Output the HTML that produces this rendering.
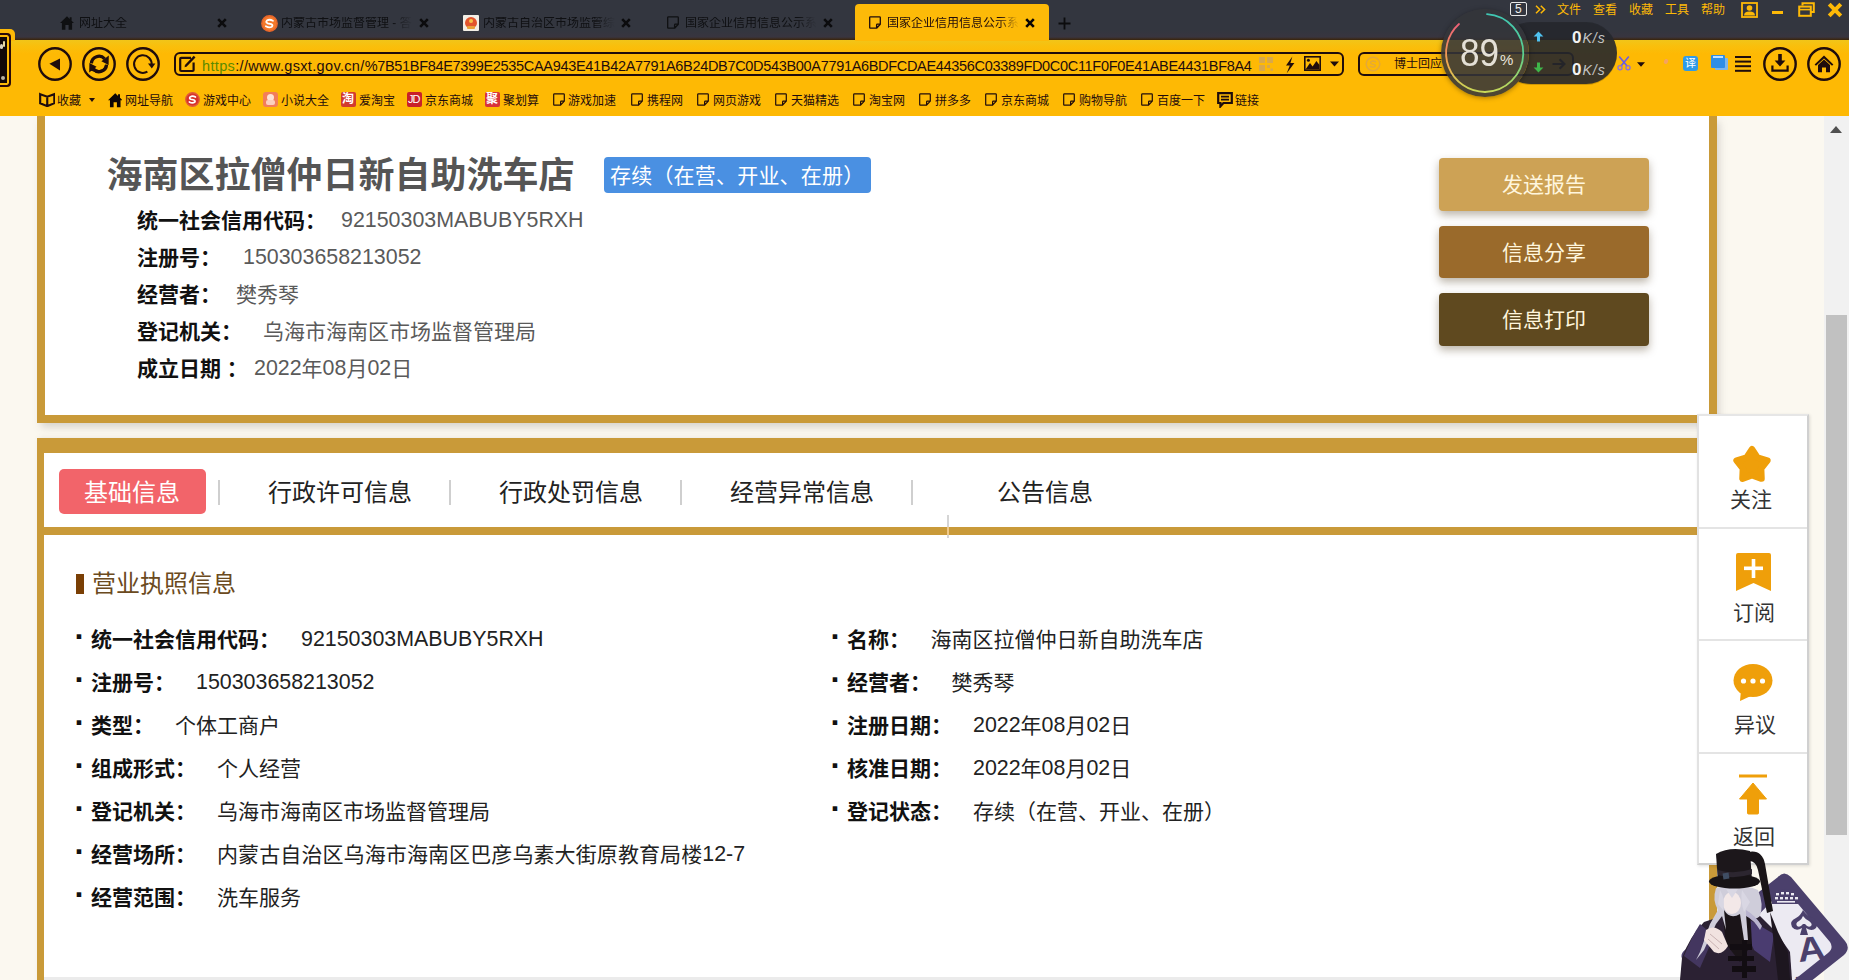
<!DOCTYPE html>
<html lang="zh-CN">
<head>
<meta charset="utf-8">
<title>国家企业信用信息公示系统</title>
<style>
*{margin:0;padding:0;box-sizing:border-box;}
html,body{width:1849px;height:980px;overflow:hidden;background:#fbf8f0;}
body{position:relative;font-family:"Liberation Sans","Noto Sans CJK SC",sans-serif;color:#222;}
.abs{position:absolute;}
.t{position:absolute;white-space:nowrap;line-height:1;}
/* ---------- browser chrome ---------- */
#topbar{left:0;top:0;width:1849px;height:40px;background:linear-gradient(#33363f 0,#33363f 30px,#38353f 37px,#3b2a1a 39px,#3a2408 40px);}
#toolbar{left:0;top:40px;width:1849px;height:76px;background:linear-gradient(#f1c519 0,#f9bf0c 6px,#feb904 14px,#feb904 100%);}
.tab{position:absolute;top:0;height:39px;width:202px;}
.tab .tt{position:absolute;left:33px;top:16px;font-size:12px;line-height:14px;color:#1b1c20;white-space:nowrap;overflow:hidden;width:128px;}
.tab .x{position:absolute;left:169px;top:16px;width:11px;height:11px;}
.tab .ic{position:absolute;left:18px;top:15px;width:14px;height:14px;}
#acttab{left:855px;top:4px;width:194px;height:37px;background:#fdba08;border-radius:4px 4px 0 0;}
.menu{font-size:12px;color:#fdb907;top:4px;}
.bm{font-size:12px;color:#1f0c0c;top:95px;letter-spacing:0;}
.bi{position:absolute;top:93px;}
/* ---------- page ---------- */
#card1{left:37px;top:116px;width:1680px;height:307px;background:#fff;border:8px solid #c99a39;border-top:none;box-shadow:3px 5px 8px -1px rgba(120,115,115,.28);}
#card2{left:37px;top:438px;width:1680px;height:560px;background:#fff;border-left:7px solid #c99a39;border-right:8px solid #c99a39;border-top:15px solid #c99a39;box-shadow:2px 0 5px rgba(120,115,115,.15);}
.lab{font-weight:bold;color:#111;font-size:21px;}
.val{color:#5a5a5a;font-size:21px;}
.n{font-size:21.4px;letter-spacing:0;position:relative;top:-1.4px;}
.val2{color:#222;font-size:21px;}
.btn{position:absolute;left:1439px;width:210px;height:52px;border-radius:4px;color:#fff6dd;font-size:21px;line-height:54px;text-align:center;overflow:hidden;box-shadow:0 4px 8px rgba(60,40,10,.35);}
.tabtxt{font-size:24px;color:#222;top:481px;}
.sep{position:absolute;width:2px;height:25px;top:480px;background:#cfcfcf;}
.dot{font-weight:bold;color:#111;font-size:32px;}
.side{position:absolute;left:1697px;width:112px;height:113px;background:#fff;border:2px solid #e2e2e2;}
.stxt{font-size:21px;color:#333;}
</style>
</head>
<body>
<!-- ======= page content ======= -->
<div id="card1" class="abs"></div>
<div id="card2" class="abs"></div>

<div class="t" style="left:106.500px;top:158px;font-size:36px;font-weight:bold;color:#555;">海南区拉僧仲日新自助洗车店</div>
<div class="abs" style="left:604px;top:157px;width:267px;height:36px;background:#4a90e2;border-radius:4px;"></div>
<div class="t" style="left:610px;top:165px;font-size:21px;letter-spacing:.2px;color:#fff;">存续（在营、开业、在册）</div>

<div class="t lab" style="left:137px;top:210px;">统一社会信用代码：</div><div class="t val" style="left:341px;top:210px;"><span class="n">92150303MABUBY5RXH</span></div>
<div class="t lab" style="left:137px;top:247px;">注册号：</div><div class="t val" style="left:243px;top:247px;"><span class="n">150303658213052</span></div>
<div class="t lab" style="left:137px;top:284px;">经营者：</div><div class="t val" style="left:236px;top:284px;">樊秀琴</div>
<div class="t lab" style="left:137px;top:321px;">登记机关：</div><div class="t val" style="left:263px;top:321px;">乌海市海南区市场监督管理局</div>
<div class="t lab" style="left:137px;top:358px;">成立日期 ：</div><div class="t val" style="left:254px;top:358px;"><span class="n">2022</span>年<span class="n">08</span>月<span class="n">02</span>日</div>

<div class="btn" style="top:158px;height:53px;background:#cda255;">发送报告</div>
<div class="btn" style="top:226px;height:52px;background:#9a6a2b;">信息分享</div>
<div class="btn" style="top:293px;height:53px;background:#5f491f;">信息打印</div>

<!-- tabs -->
<div class="abs" style="left:59px;top:469px;width:147px;height:45px;background:#f2646a;border-radius:5px;"></div>
<div class="t" style="left:84px;top:481px;font-size:24px;color:#fff;">基础信息</div>
<div class="sep" style="left:218px;"></div>
<div class="t tabtxt" style="left:268px;">行政许可信息</div>
<div class="sep" style="left:449px;"></div>
<div class="t tabtxt" style="left:499px;">行政处罚信息</div>
<div class="sep" style="left:680px;"></div>
<div class="t tabtxt" style="left:730px;">经营异常信息</div>
<div class="sep" style="left:911px;"></div>
<div class="t tabtxt" style="left:997px;">公告信息</div>
<div class="abs" style="left:947px;top:515px;width:2px;height:23px;background:#d5d5d5;"></div>
<div class="abs" style="left:44px;top:527px;width:1665px;height:8px;background:#c99a39;"></div>
<div class="abs" style="left:947px;top:527px;width:2px;height:8px;background:#f0c98a;"></div>

<!-- section -->
<div class="abs" style="left:76px;top:574px;width:8px;height:20px;background:#7a3f05;"></div>
<div class="t" style="left:92px;top:572px;font-size:24px;color:#6b4a20;">营业执照信息</div>

<div class="t dot" style="left:74.5px;top:620px;">·</div><div class="t lab" style="left:91px;top:629px;">统一社会信用代码：</div><div class="t val2" style="left:301px;top:629px;"><span class="n">92150303MABUBY5RXH</span></div>
<div class="t dot" style="left:74.5px;top:663px;">·</div><div class="t lab" style="left:91px;top:672px;">注册号：</div><div class="t val2" style="left:196px;top:672px;"><span class="n">150303658213052</span></div>
<div class="t dot" style="left:74.5px;top:706px;">·</div><div class="t lab" style="left:91px;top:715px;">类型：</div><div class="t val2" style="left:175px;top:715px;">个体工商户</div>
<div class="t dot" style="left:74.5px;top:749px;">·</div><div class="t lab" style="left:91px;top:758px;">组成形式：</div><div class="t val2" style="left:217px;top:758px;">个人经营</div>
<div class="t dot" style="left:74.5px;top:792px;">·</div><div class="t lab" style="left:91px;top:801px;">登记机关：</div><div class="t val2" style="left:217px;top:801px;">乌海市海南区市场监督管理局</div>
<div class="t dot" style="left:74.5px;top:835px;">·</div><div class="t lab" style="left:91px;top:844px;">经营场所：</div><div class="t val2" style="left:217px;top:844px;letter-spacing:.1px;">内蒙古自治区乌海市海南区巴彦乌素大街原教育局楼<span class="n">12-7</span></div>
<div class="t dot" style="left:74.5px;top:878px;">·</div><div class="t lab" style="left:91px;top:887px;">经营范围：</div><div class="t val2" style="left:217px;top:887px;">洗车服务</div>
<div class="t dot" style="left:830.5px;top:620px;">·</div><div class="t lab" style="left:847px;top:629px;">名称：</div><div class="t val2" style="left:930.5px;top:629px;">海南区拉僧仲日新自助洗车店</div>
<div class="t dot" style="left:830.5px;top:663px;">·</div><div class="t lab" style="left:847px;top:672px;">经营者：</div><div class="t val2" style="left:951.5px;top:672px;">樊秀琴</div>
<div class="t dot" style="left:830.5px;top:706px;">·</div><div class="t lab" style="left:847px;top:715px;">注册日期：</div><div class="t val2" style="left:973px;top:715px;"><span class="n">2022</span>年<span class="n">08</span>月<span class="n">02</span>日</div>
<div class="t dot" style="left:830.5px;top:749px;">·</div><div class="t lab" style="left:847px;top:758px;">核准日期：</div><div class="t val2" style="left:973px;top:758px;"><span class="n">2022</span>年<span class="n">08</span>月<span class="n">02</span>日</div>
<div class="t dot" style="left:830.5px;top:792px;">·</div><div class="t lab" style="left:847px;top:801px;">登记状态：</div><div class="t val2" style="left:973px;top:801px;">存续（在营、开业、在册）</div>

<!-- ======= floating sidebar ======= -->
<div class="abs" style="left:1697px;top:414px;width:112px;height:451px;background:#fff;border:2px solid #e0e0e0;border-color:#e6e6e6 #d0d0d0 #d0d0d0 #e2e2e2;box-shadow:1px 1px 3px rgba(0,0,0,.12);"></div>
<div class="abs" style="left:1699px;top:527px;width:108px;height:2px;background:#e4e4e4;"></div>
<div class="abs" style="left:1699px;top:639px;width:108px;height:2px;background:#e4e4e4;"></div>
<div class="abs" style="left:1699px;top:752px;width:108px;height:2px;background:#e4e4e4;"></div>
<svg class="abs" style="left:1729px;top:441px;" width="46" height="46" viewBox="0 0 46 46"><path d="M23.0 8.3 L28.6 16.7 L38.4 19.5 L32.1 27.5 L32.5 37.6 L23.0 34.1 L13.5 37.6 L13.9 27.5 L7.6 19.5 L17.4 16.7 Z" fill="#ef9f0a" stroke="#ef9f0a" stroke-width="6.5" stroke-linejoin="round"/></svg>
<div class="t stxt" style="left:1730px;top:489px;">关注</div>
<svg class="abs" style="left:1736px;top:553px;" width="35" height="39" viewBox="0 0 35 39"><path d="M2 0 H33 Q35 0 35 2 V38 L17.5 30 L0 38 V2 Q0 0 2 0 Z" fill="#ef9f0a"/><rect x="8" y="13.5" width="19" height="3.6" fill="#fff"/><rect x="15.7" y="6" width="3.6" height="19" fill="#fff"/></svg>
<div class="t stxt" style="left:1733px;top:602px;">订阅</div>
<svg class="abs" style="left:1733px;top:664px;" width="40" height="38" viewBox="0 0 40 38"><ellipse cx="20" cy="16.5" rx="19.5" ry="16.5" fill="#ef9f0a"/><path d="M8 26 L7 37 L20 31 Z" fill="#ef9f0a"/><circle cx="10.5" cy="17" r="2.6" fill="#fff"/><circle cx="20" cy="17" r="2.6" fill="#fff"/><circle cx="29.5" cy="17" r="2.6" fill="#fff"/></svg>
<div class="t stxt" style="left:1734px;top:714px;">异议</div>
<svg class="abs" style="left:1738px;top:774px;" width="30" height="41" viewBox="0 0 30 41"><rect x="1" y="0.5" width="28" height="3" fill="#ef9f0a"/><path d="M15 9 L28.5 25 H20.5 V39 Q20.5 40 19.5 40 H10.5 Q9.5 40 9.5 39 V25 H1.5 Z" fill="#ef9f0a" stroke="#ef9f0a" stroke-width="1" stroke-linejoin="round"/></svg>
<div class="t stxt" style="left:1733px;top:826px;">返回</div>
<!-- scrollbar -->
<div class="abs" style="left:1824px;top:116px;width:25px;height:864px;background:#f1f1f1;"></div>
<div class="abs" style="left:1826px;top:315px;width:21px;height:520px;background:#c1c1c1;"></div>
<svg class="abs" style="left:1830px;top:125px;" width="12" height="8" viewBox="0 0 12 8"><path d="M0 8 L6 1 L12 8 Z" fill="#505050"/></svg>
<!-- bottom grey strip -->
<div class="abs" style="left:44px;top:977px;width:1665px;height:3px;background:#ebebeb;"></div>

<!-- ======= browser chrome ======= -->
<div id="topbar" class="abs"></div>
<div id="toolbar" class="abs"></div>
<div id="acttab" class="abs"></div>
<div class="abs" style="left:-6px;top:29px;width:21px;height:12px;background:#fdb907;border-radius:5px 5px 0 0;"></div>
<div class="abs" style="left:-6px;top:33px;width:17px;height:54px;background:#120808;border:2px solid #2a0a0a;border-radius:4px;box-shadow:inset 0 0 0 2px #fdb907;"></div>
<div class="abs" style="left:0;top:44px;width:3px;height:5px;background:#d9d2c0;border-radius:2px;"></div><div class="abs" style="left:1px;top:76px;width:4px;height:4px;background:#b9b0a0;border-radius:2px;"></div><div class="abs" style="left:3px;top:41px;width:2px;height:6px;background:#e8d9a0;border-radius:1px;"></div>
<svg class="abs" style="left:60px;top:16px;" width="14" height="14" viewBox="0 0 14 14"><path d="M7 0.3 L0 7 H1.9 V13.7 H5.4 V9 H8.6 V13.7 H12.1 V7 H14 L11.6 4.7 V1.2 H9.7 V2.9 Z" fill="#0f1012"/></svg>
<div class="t" style="left:79px;top:17px;font-size:12px;color:#0f1013;width:132px;overflow:hidden;-webkit-mask-image:linear-gradient(90deg,#000 85%,transparent 100%);mask-image:linear-gradient(90deg,#000 85%,transparent 100%);">网址大全</div>
<svg class="abs" style="left:217px;top:18px;" width="10" height="10" viewBox="0 0 10 10"><path d="M1.2 1.2 L8.8 8.8 M8.8 1.2 L1.2 8.8" stroke="#0c0c0e" stroke-width="2.6" stroke-linecap="butt"/></svg>
<svg class="abs" style="left:261px;top:15px;" width="17.0" height="17.0" viewBox="0 0 16 16"><circle cx="8" cy="8" r="7.2" fill="#f4792b" stroke="#e8672c" stroke-width="1.4"/><path d="M11.2 5.4 Q8 3.6 5.6 5.2 Q4 6.8 6.2 7.8 L9.6 8.6 Q11.6 9.6 10.2 11 Q7.8 12.4 4.6 10.6" fill="none" stroke="#fff" stroke-width="1.7" stroke-linecap="round"/></svg>
<div class="t" style="left:281px;top:17px;font-size:12px;color:#0f1013;width:132px;overflow:hidden;-webkit-mask-image:linear-gradient(90deg,#000 85%,transparent 100%);mask-image:linear-gradient(90deg,#000 85%,transparent 100%);">内蒙古市场监督管理 - 答</div>
<svg class="abs" style="left:419px;top:18px;" width="10" height="10" viewBox="0 0 10 10"><path d="M1.2 1.2 L8.8 8.8 M8.8 1.2 L1.2 8.8" stroke="#0c0c0e" stroke-width="2.6" stroke-linecap="butt"/></svg>
<div class="abs" style="left:463px;top:15px;width:16px;height:16px;background:#f3efe6;border-radius:1px;"></div><div class="abs" style="left:465px;top:17px;width:12px;height:11px;background:#e2552d;border-radius:6px 6px 5px 5px;"></div><div class="abs" style="left:467px;top:26px;width:8px;height:3px;background:#e9a13a;border-radius:1px;"></div><div class="abs" style="left:469px;top:19px;width:4px;height:4px;background:#f6c34a;border-radius:2px;"></div>
<div class="t" style="left:483px;top:17px;font-size:12px;color:#0f1013;width:132px;overflow:hidden;-webkit-mask-image:linear-gradient(90deg,#000 85%,transparent 100%);mask-image:linear-gradient(90deg,#000 85%,transparent 100%);">内蒙古自治区市场监管综</div>
<svg class="abs" style="left:621px;top:18px;" width="10" height="10" viewBox="0 0 10 10"><path d="M1.2 1.2 L8.8 8.8 M8.8 1.2 L1.2 8.8" stroke="#0c0c0e" stroke-width="2.6" stroke-linecap="butt"/></svg>
<svg class="abs" style="left:667px;top:16px;" width="12" height="13" viewBox="0 0 12 13"><path d="M1.5 0.8 H10.5 Q11.3 0.8 11.3 1.6 V8.2 L7.6 12.2 H1.5 Q0.7 12.2 0.7 11.4 V1.6 Q0.7 0.8 1.5 0.8 Z M11.3 8.2 H8.4 Q7.6 8.2 7.6 9 V12.2" fill="none" stroke="#0f1012" stroke-width="1.3" stroke-linejoin="round"/></svg>
<div class="t" style="left:685px;top:17px;font-size:12px;color:#0f1013;width:132px;overflow:hidden;-webkit-mask-image:linear-gradient(90deg,#000 85%,transparent 100%);mask-image:linear-gradient(90deg,#000 85%,transparent 100%);">国家企业信用信息公示系</div>
<svg class="abs" style="left:823px;top:18px;" width="10" height="10" viewBox="0 0 10 10"><path d="M1.2 1.2 L8.8 8.8 M8.8 1.2 L1.2 8.8" stroke="#0c0c0e" stroke-width="2.6" stroke-linecap="butt"/></svg>
<svg class="abs" style="left:869px;top:16px;" width="12" height="13" viewBox="0 0 12 13"><path d="M1.5 0.8 H10.5 Q11.3 0.8 11.3 1.6 V8.2 L7.6 12.2 H1.5 Q0.7 12.2 0.7 11.4 V1.6 Q0.7 0.8 1.5 0.8 Z M11.3 8.2 H8.4 Q7.6 8.2 7.6 9 V12.2" fill="none" stroke="#1f0c0c" stroke-width="1.3" stroke-linejoin="round"/></svg>
<div class="t" style="left:887px;top:17px;font-size:12px;color:#1f0c0c;width:132px;overflow:hidden;-webkit-mask-image:linear-gradient(90deg,#000 85%,transparent 100%);mask-image:linear-gradient(90deg,#000 85%,transparent 100%);">国家企业信用信息公示系统</div>
<svg class="abs" style="left:1025px;top:18px;" width="10" height="10" viewBox="0 0 10 10"><path d="M1.2 1.2 L8.8 8.8 M8.8 1.2 L1.2 8.8" stroke="#0a0606" stroke-width="2.6" stroke-linecap="butt"/></svg>
<svg class="abs" style="left:1058px;top:17px;" width="13" height="13" viewBox="0 0 13 13"><path d="M6.5 0.5 V12.5 M0.5 6.5 H12.5" stroke="#0c0c0e" stroke-width="1.8"/></svg>
<div class="abs" style="left:1510px;top:2px;width:17px;height:14px;border:1.3px solid #e8e8e8;border-radius:2px;"></div><div class="t" style="left:1515px;top:3px;font-size:12px;color:#f0f0f0;">5</div>
<svg class="abs" style="left:1535px;top:5px;" width="11" height="9" viewBox="0 0 11 9"><path d="M1 0.8 L4.8 4.5 L1 8.2 M5.8 0.8 L9.6 4.5 L5.8 8.2" fill="none" stroke="#fdb907" stroke-width="1.5"/></svg>
<div class="t menu" style="left:1557px;">文件</div>
<div class="t menu" style="left:1593px;">查看</div>
<div class="t menu" style="left:1629px;">收藏</div>
<div class="t menu" style="left:1665px;">工具</div>
<div class="t menu" style="left:1701px;">帮助</div>
<svg class="abs" style="left:1741px;top:2px;" width="17" height="16" viewBox="0 0 17 16"><rect x="1" y="1" width="15" height="14" fill="none" stroke="#fdb907" stroke-width="1.8"/><circle cx="8.5" cy="6" r="2.8" fill="#fdb907"/><path d="M3 13.5 Q3 9.5 8.5 9.5 Q14 9.5 14 13.5 Z" fill="#fdb907"/></svg>
<div class="abs" style="left:1772px;top:11px;width:11px;height:3px;background:#fdb907;"></div>
<svg class="abs" style="left:1798px;top:2px;" width="17" height="15" viewBox="0 0 17 15"><path d="M4.5 3.5 V1.2 H15.8 V10 H13" fill="none" stroke="#fdb907" stroke-width="2"/><rect x="1.2" y="4.6" width="11.6" height="9.2" fill="none" stroke="#fdb907" stroke-width="2"/><path d="M1.2 7.6 H12.8" stroke="#fdb907" stroke-width="1.6"/></svg>
<svg class="abs" style="left:1827px;top:2px;" width="16" height="16" viewBox="0 0 16 16"><path d="M2.2 2.2 L13.8 13.8 M13.8 2.2 L2.2 13.8" stroke="#fdb907" stroke-width="4"/></svg>
<svg class="abs" style="left:37px;top:46px;" width="36" height="36" viewBox="-18 -18 36 36"><circle r="15.7" fill="none" stroke="#1f0c0c" stroke-width="2.4"/><path d="M-5.6 -0.2 L5 -5.6 L5 6.6 Z" fill="#1f0c0c"/></svg>
<svg class="abs" style="left:81px;top:46px;" width="36" height="36" viewBox="-18 -18 36 36"><circle r="15.7" fill="none" stroke="#1f0c0c" stroke-width="2.4"/><g id="rf"><path d="M-7.6 -0.6 A7.6 7.6 0 0 1 5.6 -5.2" fill="none" stroke="#1f0c0c" stroke-width="3.2"/><path d="M2.4 -2.8 L9.8 -8.6 L9.6 1 Z" fill="#1f0c0c"/></g><g transform="rotate(180)"><path d="M-7.6 -0.6 A7.6 7.6 0 0 1 5.6 -5.2" fill="none" stroke="#1f0c0c" stroke-width="3.2"/><path d="M2.4 -2.8 L9.8 -8.6 L9.6 1 Z" fill="#1f0c0c"/></g><path d="M7.2 1.2 A7.4 7.4 0 0 1 -6 4.4" fill="none" stroke="#1f0c0c" stroke-width="2.6"/><path d="M-3 8.2 L-8.6 6.6 L-8.2 0.6 Z" fill="#1f0c0c"/></svg>
<svg class="abs" style="left:125px;top:46px;" width="36" height="36" viewBox="-18 -18 36 36"><circle r="15.7" fill="none" stroke="#1f0c0c" stroke-width="2.4"/><path d="M8.6 1.2 A8.8 8.8 0 1 0 4.4 7.6" fill="none" stroke="#1f0c0c" stroke-width="2"/><path d="M5 -0.6 L12.4 -0.6 L8.8 4.4 Z" fill="#1f0c0c"/></svg>
<div class="abs" style="left:174px;top:52px;width:1170px;height:24px;border:2.4px solid #1f0c0c;border-radius:6px;"></div>
<svg class="abs" style="left:179px;top:54px;" width="19" height="19" viewBox="0 0 19 19"><path d="M12 3.8 H2.2 Q1.2 3.8 1.2 4.8 V16 Q1.2 17 2.2 17 H13.6 Q14.6 17 14.6 16 V8.6" fill="none" stroke="#1f0c0c" stroke-width="2.2"/><path d="M6.6 12 L15.6 2.6" stroke="#1f0c0c" stroke-width="2.4"/><path d="M5.6 13.2 L6 11 L7.6 12.6 Z" fill="#1f0c0c"/></svg>
<div class="t" id="url" style="left:202px;top:58.500px;font-size:14.5px;color:#1f0c0c;letter-spacing:-0.19px;"><span id="upre" style="letter-spacing:.34px;"><span style="color:#5b8a00;">https</span>://www.gsxt.gov.cn/</span><span id="uhex" style="letter-spacing:-.318px;">%7B51BF84E7399E2535CAA943E41B42A7791A6B24DB7C0D543B00A7791A6BDFCDAE44356C03389FD0C0C11F0F0E41ABE4431BF8A4</span></div>
<svg class="abs" style="left:1259px;top:57px;" width="14" height="14" viewBox="0 0 14 14" fill="#d9a84a"><rect x="0" y="0" width="6" height="6"/><rect x="8" y="0" width="6" height="6"/><rect x="0" y="8" width="6" height="6"/><rect x="8" y="8" width="3" height="3"/><rect x="11.5" y="11.5" width="2.5" height="2.5"/></svg>
<svg class="abs" style="left:1284px;top:56px;" width="12" height="18" viewBox="0 0 12 18"><path d="M8.4 0.6 L2 9.4 L5.8 9.4 L2.6 17.4 L10.4 7 L6.4 7 Z" fill="#1f0c0c"/></svg>
<svg class="abs" style="left:1304px;top:56px;" width="17" height="15" viewBox="0 0 17 15"><rect x="0.8" y="0.8" width="15.4" height="13.4" fill="none" stroke="#1f0c0c" stroke-width="1.6"/><path d="M1.5 13.5 L6 7 L8.6 10.4 L12.4 5 L15.5 9 V13.5 Z" fill="#1f0c0c"/><circle cx="4.4" cy="4.2" r="1.5" fill="#1f0c0c"/></svg>
<svg class="abs" style="left:1330px;top:61px;" width="9" height="6" viewBox="0 0 9 6"><path d="M0 0.4 H9 L4.5 5.6 Z" fill="#1f0c0c"/></svg>
<div class="abs" style="left:1358px;top:52px;width:216px;height:24px;border:2.4px solid #1f0c0c;border-radius:6px;"></div>
<svg class="abs" style="left:1365px;top:56px;" width="16" height="16" viewBox="0 0 16 16"><circle cx="8" cy="8" r="6.8" fill="none" stroke="#e3a93a" stroke-width="1.5"/><path d="M10.6 5.8 Q8 4.4 6 5.6 Q4.8 7 6.6 7.8 L9.4 8.6 Q11 9.6 9.8 10.6 Q7.8 11.8 5.2 10.4" fill="none" stroke="#e3a93a" stroke-width="1.4" stroke-linecap="round"/></svg>
<div class="t" style="left:1394px;top:58px;font-size:12px;color:#1f0c0c;">博士回应</div>
<svg class="abs" style="left:1552px;top:58px;" width="14" height="12" viewBox="0 0 14 12"><path d="M0.5 6 H12 M7.6 1.2 L12.4 6 L7.6 10.8" fill="none" stroke="#1f0c0c" stroke-width="2.2"/></svg>
<svg class="abs" style="left:1616px;top:55px;" width="16" height="16" viewBox="0 0 20 20"><path d="M4 2 L14 14 M16 2 L6 14" stroke="#6a5be6" stroke-width="2"/><circle cx="5" cy="16" r="2.6" fill="none" stroke="#8a6de0" stroke-width="1.6"/><circle cx="15" cy="16" r="2.6" fill="none" stroke="#8a6de0" stroke-width="1.6"/></svg>
<svg class="abs" style="left:1637px;top:62px;" width="8" height="5" viewBox="0 0 8 5"><path d="M0 0.2 H8 L4 4.8 Z" fill="#1f0c0c"/></svg>
<div class="abs" style="left:1664px;top:59px;width:4px;height:5px;background:#f29a86;border-radius:2px;opacity:.7;transform:rotate(30deg);"></div>
<div class="abs" style="left:1683px;top:56px;width:15px;height:15px;background:#2f9be8;border-radius:3px;"></div><div class="t" style="left:1685px;top:58px;font-size:11px;color:#fff;">译</div>
<div class="abs" style="left:1715px;top:58px;width:13px;height:12px;background:#7fb7ea;border-radius:1px;"></div><div class="abs" style="left:1711px;top:55px;width:14px;height:13px;background:#2f8ee6;border-radius:1px;"></div><div class="abs" style="left:1713px;top:56px;width:10px;height:1.5px;background:#bfe0ff;"></div>
<div class="abs" style="left:1735px;top:56px;width:16px;height:2.4px;background:#1f0c0c;box-shadow:0 4.6px 0 #1f0c0c,0 9.2px 0 #1f0c0c,0 13.8px 0 #1f0c0c;"></div>
<svg class="abs" style="left:1762px;top:46px;" width="36" height="36" viewBox="-18 -18 36 36"><circle r="15.7" fill="none" stroke="#1f0c0c" stroke-width="2.4"/><path d="M-1.8 -10 H1.8 V-3.6 H5.4 L0 2.6 L-5.4 -3.6 H-1.8 Z" fill="#1f0c0c"/><path d="M-7.6 1.6 V6.6 H7.6 V1.6" fill="none" stroke="#1f0c0c" stroke-width="2.2"/></svg>
<svg class="abs" style="left:1806px;top:46px;" width="36" height="36" viewBox="-18 -18 36 36"><circle r="15.7" fill="none" stroke="#1f0c0c" stroke-width="2.4"/><path d="M0 -8.6 L-9.4 0.4 L-8 1.8 L0 -5.6 L8 1.8 L9.4 0.4 Z" fill="#1f0c0c"/><path d="M0 -4.6 L-6 1 V8.2 H-2 V3.4 H2 V8.2 H6 V1 Z" fill="#1f0c0c"/></svg>
<svg class="abs" style="left:38.500px;top:91.500px;" width="16.500" height="15.500" viewBox="0 0 17 16"><path d="M1.2 2.2 L8.5 4.8 L15.8 2.2 V11.6 L8.5 14.6 L1.2 11.6 Z M8.5 4.8 V14.6" fill="none" stroke="#1f0c0c" stroke-width="2.2" stroke-linejoin="miter"/></svg>
<div class="t bm" style="left:57px;">收藏</div>
<svg class="abs" style="left:89px;top:98px;" width="6" height="4" viewBox="0 0 6 4"><path d="M0 0 H6 L3 4 Z" fill="#1f0c0c"/></svg>
<svg class="abs" style="left:107.500px;top:93px;" width="14.500" height="14.500" viewBox="0 0 14 14"><path d="M7 0.3 L0 7 H1.9 V13.7 H5.4 V9 H8.6 V13.7 H12.1 V7 H14 L11.6 4.7 V1.2 H9.7 V2.9 Z" fill="#0d0505"/></svg>
<div class="t bm" style="left:125px;">网址导航</div>
<svg class="abs" style="left:185px;top:92px;" width="15.0" height="15.0" viewBox="0 0 16 16"><circle cx="8" cy="8" r="7.2" fill="#d8322a" stroke="#e05a3a" stroke-width="1.4"/><path d="M11.2 5.4 Q8 3.6 5.6 5.2 Q4 6.8 6.2 7.8 L9.6 8.6 Q11.6 9.6 10.2 11 Q7.8 12.4 4.6 10.6" fill="none" stroke="#fff" stroke-width="1.7" stroke-linecap="round"/></svg>
<div class="t bm" style="left:203px;">游戏中心</div>
<div class="abs" style="left:263px;top:92px;width:15px;height:15px;background:#f27d5a;border-radius:3px;"></div><div class="abs" style="left:267px;top:94px;width:7px;height:7px;background:#fde3d6;border-radius:4px;"></div><div class="abs" style="left:266px;top:100px;width:9px;height:5px;background:#fbd0bd;border-radius:2px;"></div>
<div class="t bm" style="left:281px;">小说大全</div>
<div class="abs" style="left:341px;top:92px;width:15px;height:15px;background:#d23a2e;border-radius:2px;"></div><div class="t" style="left:342px;top:93px;font-size:12px;color:#fff;font-weight:bold;">淘</div>
<div class="t bm" style="left:359px;">爱淘宝</div>
<div class="abs" style="left:407px;top:92px;width:15px;height:15px;background:#c8202a;border-radius:2px;"></div><div class="t" style="left:408px;top:94px;font-size:11px;color:#fff;letter-spacing:-1px;">JD</div>
<div class="t bm" style="left:425px;">京东商城</div>
<div class="abs" style="left:485px;top:92px;width:15px;height:15px;background:#d8323a;border-radius:2px;"></div><div class="t" style="left:486px;top:93px;font-size:12px;color:#fff;font-weight:bold;">聚</div>
<div class="t bm" style="left:503px;">聚划算</div>
<svg class="abs" style="left:553px;top:93px;" width="12" height="13" viewBox="0 0 12 13"><path d="M1.5 0.8 H10.5 Q11.3 0.8 11.3 1.6 V8.2 L7.6 12.2 H1.5 Q0.7 12.2 0.7 11.4 V1.6 Q0.7 0.8 1.5 0.8 Z M11.3 8.2 H8.4 Q7.6 8.2 7.6 9 V12.2" fill="none" stroke="#1f0c0c" stroke-width="1.2" stroke-linejoin="round"/></svg>
<div class="t bm" style="left:568px;">游戏加速</div>
<svg class="abs" style="left:631px;top:93px;" width="12" height="13" viewBox="0 0 12 13"><path d="M1.5 0.8 H10.5 Q11.3 0.8 11.3 1.6 V8.2 L7.6 12.2 H1.5 Q0.7 12.2 0.7 11.4 V1.6 Q0.7 0.8 1.5 0.8 Z M11.3 8.2 H8.4 Q7.6 8.2 7.6 9 V12.2" fill="none" stroke="#1f0c0c" stroke-width="1.2" stroke-linejoin="round"/></svg>
<div class="t bm" style="left:647px;">携程网</div>
<svg class="abs" style="left:697px;top:93px;" width="12" height="13" viewBox="0 0 12 13"><path d="M1.5 0.8 H10.5 Q11.3 0.8 11.3 1.6 V8.2 L7.6 12.2 H1.5 Q0.7 12.2 0.7 11.4 V1.6 Q0.7 0.8 1.5 0.8 Z M11.3 8.2 H8.4 Q7.6 8.2 7.6 9 V12.2" fill="none" stroke="#1f0c0c" stroke-width="1.2" stroke-linejoin="round"/></svg>
<div class="t bm" style="left:713px;">网页游戏</div>
<svg class="abs" style="left:775px;top:93px;" width="12" height="13" viewBox="0 0 12 13"><path d="M1.5 0.8 H10.5 Q11.3 0.8 11.3 1.6 V8.2 L7.6 12.2 H1.5 Q0.7 12.2 0.7 11.4 V1.6 Q0.7 0.8 1.5 0.8 Z M11.3 8.2 H8.4 Q7.6 8.2 7.6 9 V12.2" fill="none" stroke="#1f0c0c" stroke-width="1.2" stroke-linejoin="round"/></svg>
<div class="t bm" style="left:791px;">天猫精选</div>
<svg class="abs" style="left:853px;top:93px;" width="12" height="13" viewBox="0 0 12 13"><path d="M1.5 0.8 H10.5 Q11.3 0.8 11.3 1.6 V8.2 L7.6 12.2 H1.5 Q0.7 12.2 0.7 11.4 V1.6 Q0.7 0.8 1.5 0.8 Z M11.3 8.2 H8.4 Q7.6 8.2 7.6 9 V12.2" fill="none" stroke="#1f0c0c" stroke-width="1.2" stroke-linejoin="round"/></svg>
<div class="t bm" style="left:869px;">淘宝网</div>
<svg class="abs" style="left:919px;top:93px;" width="12" height="13" viewBox="0 0 12 13"><path d="M1.5 0.8 H10.5 Q11.3 0.8 11.3 1.6 V8.2 L7.6 12.2 H1.5 Q0.7 12.2 0.7 11.4 V1.6 Q0.7 0.8 1.5 0.8 Z M11.3 8.2 H8.4 Q7.6 8.2 7.6 9 V12.2" fill="none" stroke="#1f0c0c" stroke-width="1.2" stroke-linejoin="round"/></svg>
<div class="t bm" style="left:935px;">拼多多</div>
<svg class="abs" style="left:985px;top:93px;" width="12" height="13" viewBox="0 0 12 13"><path d="M1.5 0.8 H10.5 Q11.3 0.8 11.3 1.6 V8.2 L7.6 12.2 H1.5 Q0.7 12.2 0.7 11.4 V1.6 Q0.7 0.8 1.5 0.8 Z M11.3 8.2 H8.4 Q7.6 8.2 7.6 9 V12.2" fill="none" stroke="#1f0c0c" stroke-width="1.2" stroke-linejoin="round"/></svg>
<div class="t bm" style="left:1001px;">京东商城</div>
<svg class="abs" style="left:1063px;top:93px;" width="12" height="13" viewBox="0 0 12 13"><path d="M1.5 0.8 H10.5 Q11.3 0.8 11.3 1.6 V8.2 L7.6 12.2 H1.5 Q0.7 12.2 0.7 11.4 V1.6 Q0.7 0.8 1.5 0.8 Z M11.3 8.2 H8.4 Q7.6 8.2 7.6 9 V12.2" fill="none" stroke="#1f0c0c" stroke-width="1.2" stroke-linejoin="round"/></svg>
<div class="t bm" style="left:1079px;">购物导航</div>
<svg class="abs" style="left:1141px;top:93px;" width="12" height="13" viewBox="0 0 12 13"><path d="M1.5 0.8 H10.5 Q11.3 0.8 11.3 1.6 V8.2 L7.6 12.2 H1.5 Q0.7 12.2 0.7 11.4 V1.6 Q0.7 0.8 1.5 0.8 Z M11.3 8.2 H8.4 Q7.6 8.2 7.6 9 V12.2" fill="none" stroke="#1f0c0c" stroke-width="1.2" stroke-linejoin="round"/></svg>
<div class="t bm" style="left:1157px;">百度一下</div>
<svg class="abs" style="left:1217px;top:92px;" width="16" height="16" viewBox="0 0 16 16"><path d="M1.2 1.2 H14.8 V11 H6.4 L3.4 14.4 V11 H1.2 Z" fill="none" stroke="#1f0c0c" stroke-width="2.2" stroke-linejoin="miter"/><path d="M4 4.6 H12 M4 7.6 H12" stroke="#1f0c0c" stroke-width="1.6"/></svg>
<div class="t bm" style="left:1235px;">链接</div>
<svg class="abs" style="left:1500px;top:20px;" width="122" height="68" viewBox="0 -2 122 68"><defs><mask id="pm"><rect x="-5" y="-5" width="140" height="80" fill="#fff"/><circle cx="-15" cy="31" r="44" fill="#000"/></mask></defs><rect x="0" y="1" width="117" height="62" rx="31" fill="rgba(0,0,0,.18)" mask="url(#pm)"/><rect x="0" y="0" width="117" height="62" rx="31" fill="rgba(38,40,46,.88)" mask="url(#pm)"/></svg>
<div class="abs" style="left:1441px;top:9px;width:88px;height:88px;border-radius:44px;background:rgba(52,53,57,.87);box-shadow:0 1px 5px rgba(0,0,0,.35);"></div>
<svg class="abs" style="left:1441px;top:9px;" width="88" height="88" viewBox="-44 -44 88 88">
<defs><linearGradient id="rg1" x1="0" y1="0" x2="0" y2="1"><stop offset="0" stop-color="#3fc7b4"/><stop offset=".55" stop-color="#5fd08a"/><stop offset="1" stop-color="#c8d957"/></linearGradient>
<linearGradient id="rg2" x1="0" y1="1" x2="0" y2="0"><stop offset="0" stop-color="#c8d957"/><stop offset=".45" stop-color="#f0a64e"/><stop offset="1" stop-color="#ee5f78"/></linearGradient></defs>
<path d="M2 -38.9 A39 39 0 0 1 0 39" fill="none" stroke="url(#rg1)" stroke-width="1.8" stroke-linecap="round"/>
<path d="M0 39 A39 39 0 0 1 -26 -29" fill="none" stroke="url(#rg2)" stroke-width="1.8" stroke-linecap="round"/></svg>
<div class="t" style="left:1460px;top:32.500px;font-size:39px;color:#e4e0d6;transform:scaleX(.9);transform-origin:0 0;letter-spacing:0;font-weight:normal;">89</div>
<div class="t" style="left:1500px;top:52px;font-size:15px;color:#e9e5dc;">%</div>
<svg class="abs" style="left:1533px;top:31px;" width="11" height="11" viewBox="0 0 11 11"><path d="M5.5 0.4 L10.4 5.6 H7 V10.6 H4 V5.6 H0.6 Z" fill="#4fc1f0"/></svg>
<svg class="abs" style="left:1533px;top:62px;" width="11" height="11" viewBox="0 0 11 11"><path d="M5.5 10.6 L10.4 5.4 H7 V0.4 H4 V5.4 H0.6 Z" fill="#3fb64a"/></svg>
<div class="t" style="left:1572px;top:29px;font-size:17px;font-weight:bold;color:#f2f2f2;">0<span style="font-size:14px;font-weight:normal;font-style:italic;color:#c4c4c4;letter-spacing:1px;margin-left:1px;">K/s</span></div>
<div class="t" style="left:1572px;top:61px;font-size:17px;font-weight:bold;color:#f2f2f2;">0<span style="font-size:14px;font-weight:normal;font-style:italic;color:#c4c4c4;letter-spacing:1px;margin-left:1px;">K/s</span></div>

<!-- ======= mascot (browser skin decoration) ======= -->
<svg class="abs" style="left:1670px;top:840px;" width="179" height="140" viewBox="0 0 179 140">
<g>
<path d="M108 37 Q114 30 121 37 L175 101 Q181 108 174 115 L82 188 L14 122 Q8 115 16 109 Z" fill="#4b406c"/>
<path d="M111 52 Q114 48 118 52 L160 102 Q164 108 158 113 L84 172 L40 124 Z" fill="#eceaf2"/>
<g fill="#4b406c">
<path d="M102 58 Q104 49 116 49 L124 50 Q131 52 130 60 L129 64 H102 Z"/>
<path d="M133 70 Q137 76 143 78 Q150 82 146 88 Q142 92 136 88 L138 95 H130 L132 88 Q126 92 122 87 Q119 81 126 78 Q131 75 133 70 Z"/>
</g>
<path d="M133 76 Q135 79 139 81 Q143 84 141 86 Q138 88 135 84 L133 84 Q130 88 127 86 Q125 83 129 81 Q132 79 133 76 Z" fill="#eceaf2"/>
<g fill="#eceaf2"><rect x="106" y="53" width="3" height="2.4"/><rect x="111" y="52" width="3" height="2.4"/><rect x="116" y="52" width="3" height="2.4"/><rect x="121" y="53" width="3" height="2.4"/><rect x="105" y="57" width="3" height="2.4"/><rect x="110" y="57" width="3" height="2.4"/><rect x="115" y="57" width="3" height="2.4"/><rect x="120" y="57" width="3" height="2.4"/><rect x="125" y="57" width="3" height="2.4"/><rect x="107" y="61" width="18" height="1.6"/></g>
<text x="0" y="0" font-family="Liberation Sans, sans-serif" font-weight="bold" font-size="34" fill="#4b406c" transform="translate(129 122) rotate(-7) scale(1.12 1)">A</text>
<text x="124" y="158" font-family="Liberation Sans, sans-serif" font-weight="bold" font-size="32" fill="#4b406c" transform="rotate(-6 135 140)">K</text>
</g>
<!-- coat -->
<path d="M34 82 L58 74 L88 74 L106 92 L120 112 L122 140 L10 140 L12 118 Q20 96 34 82 Z" fill="#2b2133"/>
<path d="M30 84 Q22 96 14 116 L30 128 L44 96 Z" fill="#43365f"/>
<path d="M80 80 L104 94 L100 122 L84 110 L76 92 Z" fill="#4a3c70"/>
<path d="M52 70 H80 L82 104 L70 122 L56 104 Z" fill="#1a1418"/>
<path d="M60 104 h22 v6 h-22z M58 116 h26 v5 h-26z M62 126 h24 v6 h-24z M72 100 h5 v38 h-5z" fill="#120d12"/>
<path d="M100 72 L108 92 L118 112 L120 140 L108 140 L104 104 Z" fill="#1d161f"/>
<!-- hair -->
<path d="M46 48 Q42 60 48 70 L40 84 L30 112 L26 120 L34 110 L46 84 L52 76 L56 90 L54 70 Q60 80 70 74 L74 100 L78 100 L76 74 Q84 82 90 76 Q94 64 88 50 Q70 42 46 48 Z" fill="#cfcdda"/>
<path d="M76 70 Q86 76 92 86 L90 90 Q84 80 76 76 Z" fill="#b9b4cf"/>
<ellipse cx="62" cy="63" rx="9" ry="11" fill="#f3e8e8"/>
<path d="M50 50 Q56 60 53 70 L48 64 Z M72 50 Q70 60 74 72 L80 62 Z M56 49 L62 58 L68 49 Z" fill="#d9d7e3"/>
<!-- hand -->
<path d="M36 90 Q44 84 52 92 L58 106 Q52 116 44 112 L34 100 Z" fill="#f1e3e0"/>
<path d="M40 94 L52 104 M38 99 L49 109" stroke="#c9b3b3" stroke-width="1"/>
<!-- hat -->
<path d="M78 12 Q92 9 95 24 L103 71 L97 73 L88 30 Q86 21 79 21 Z" fill="#1a1518"/>
<path d="M46 14 Q60 6 80 11 L82 41 L48 43 Z" fill="#1c171b"/>
<ellipse cx="64.500" cy="41.500" rx="25.500" ry="7" fill="#171316"/>
<path d="M48 30 Q64 35 82 29 L82 34 Q64 40 48 35 Z" fill="#2c2630"/>
<rect x="53" y="33" width="6" height="6" fill="#3f4d63" transform="rotate(-8 56 36)"/>
</svg>
</body>
</html>
